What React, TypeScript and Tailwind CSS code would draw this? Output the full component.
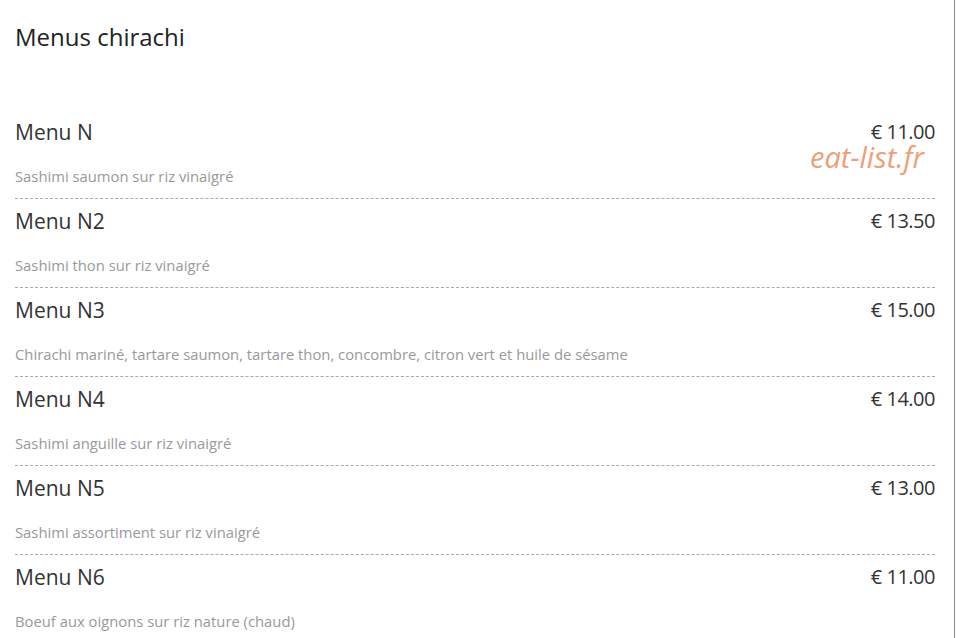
const menus = [
  { name: "Menu N", price: "€ 11.00", desc: "Sashimi saumon sur riz vinaigré" },
  { name: "Menu N2", price: "€ 13.50", desc: "Sashimi thon sur riz vinaigré" },
  {
    name: "Menu N3",
    price: "€ 15.00",
    desc: "Chirachi mariné, tartare saumon, tartare thon, concombre, citron vert et huile de sésame",
  },
  { name: "Menu N4", price: "€ 14.00", desc: "Sashimi anguille sur riz vinaigré" },
  { name: "Menu N5", price: "€ 13.00", desc: "Sashimi assortiment sur riz vinaigré" },
  { name: "Menu N6", price: "€ 11.00", desc: "Boeuf aux oignons sur riz nature (chaud)" },
];

export default function App() {
  return (
    <div className="h-[638px] w-[956px] overflow-hidden bg-white font-['Open_Sans',sans-serif]">
      <div className="relative h-full w-[955px] border-r border-[#8a8a8a] pl-[15px] pr-[19px]">
        <h2 className="pt-[21px] text-[24px] leading-[32px] text-[#222]">Menus chirachi</h2>
        <div className="mt-[57px]">
          {menus.map((m) => (
            <div key={m.name} className="border-b border-dashed border-[#aaa] pt-2 pb-3">
              <div className="flex items-center justify-between text-[20px] leading-[28px] text-[#333]">
                <span className="text-[21px]">{m.name}</span>
                <span className="tracking-[-0.5px]">{m.price}</span>
              </div>
              <p className="mt-5 text-[14.8px] leading-[20px] text-[#999]">{m.desc}</p>
            </div>
          ))}
        </div>
        <span className="absolute top-[147px] right-[30px] text-[29px] italic leading-[20px] text-[#eca07a]">
          eat-list.fr
        </span>
      </div>
    </div>
  );
}
